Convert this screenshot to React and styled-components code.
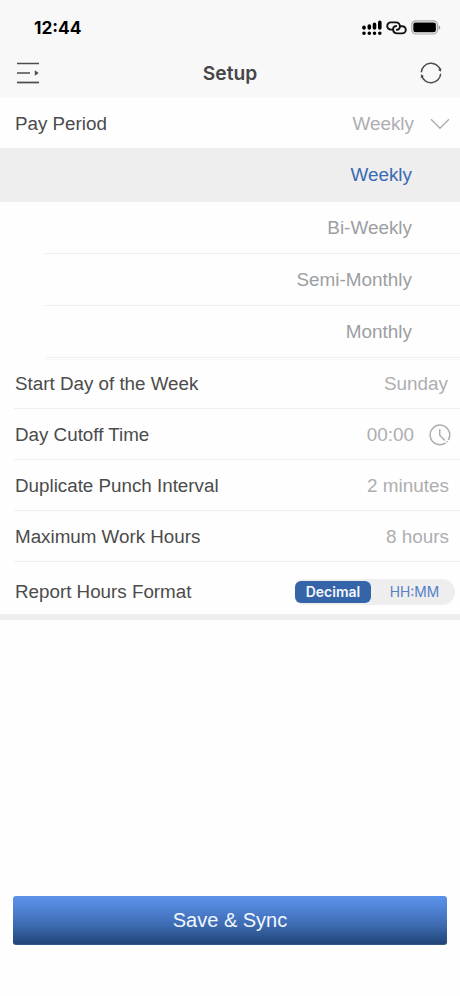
import React, { useState } from 'react';
import styled, { createGlobalStyle } from 'styled-components';

const GlobalStyle = createGlobalStyle`
  * {
    box-sizing: border-box;
  }

  body {
    margin: 0;
    background-color: #fefefe;
    font-family: 'Liberation Sans', Arial, sans-serif;
  }
`;

const Screen = styled.div`
  display: flex;
  flex-direction: column;
  width: 460px;
  height: 996px;
  background-color: #fefefe;
  overflow: hidden;
`;

const Header = styled.header`
  height: 98px;
  background-color: #f8f8f8;
`;

const StatusBar = styled.div`
  display: flex;
  justify-content: space-between;
  align-items: center;
  height: 50px;
  padding: 5px 19px 0 34px;
`;

const Time = styled.span`
  font-family: Inter, sans-serif;
  font-size: 17.3px;
  font-weight: 700;
  color: #000;
`;

const StatusIcons = styled.div`
  display: flex;
  align-items: center;
  gap: 4px;
`;

const NavBar = styled.div`
  display: grid;
  grid-template-columns: 60px 1fr 60px;
  align-items: center;
  height: 46px;
`;

const Title = styled.h1`
  margin: 0;
  font-family: Inter, sans-serif;
  font-size: 19.2px;
  font-weight: 600;
  text-align: center;
  color: #464648;
`;

const IconButton = styled.button`
  display: flex;
  justify-content: ${({ $end }) => ($end ? 'flex-end' : 'flex-start')};
  padding: ${({ $end }) => ($end ? '0 18px 0 0' : '0 0 0 16px')};
  background: none;
  border: none;
  color: #4c4c4e;
  cursor: pointer;
`;

const Row = styled.div`
  display: flex;
  justify-content: space-between;
  align-items: center;
  height: ${({ $height }) => $height || 51}px;
  margin-left: 14px;
  padding: ${({ $top }) => $top || 0}px ${({ $right }) => $right || 0}px 0 1px;
  border-bottom: ${({ $last }) => ($last ? 'none' : '1px solid #efefef')};
`;

const Label = styled.span`
  font-size: 18.8px;
  line-height: 24px;
  color: #4b4b4b;
`;

const Value = styled.span`
  display: flex;
  align-items: center;
  gap: ${({ $gap }) => $gap || 0}px;
  font-size: 18.9px;
  line-height: 24px;
  color: #adaeb2;
`;

const Options = styled.div`
  display: flex;
  flex-direction: column;
  padding-bottom: 1px;
`;

const Option = styled.button`
  display: flex;
  justify-content: flex-end;
  align-items: center;
  height: ${({ $active }) => ($active ? 54 : 52)}px;
  margin-left: ${({ $active }) => ($active ? 0 : 45)}px;
  padding: ${({ $active }) => ($active ? '0 48px 1px 0' : '1px 48px 0 0')};
  background-color: ${({ $active }) => ($active ? '#eeeeee' : 'transparent')};
  border: none;
  border-bottom: ${({ $active }) => ($active ? 'none' : '1px solid #efefef')};
  font-family: inherit;
  font-size: 18.9px;
  color: ${({ $active }) => ($active ? '#3a6ab3' : '#9c9ea3')};
  cursor: pointer;
`;

const OptionsEnd = styled.div`
  height: 1px;
  margin-left: 45px;
  background-color: #f6f6f6;
`;

const Segmented = styled.div`
  display: flex;
  align-items: center;
  width: 160px;
  height: 26px;
  background-color: #eeeeef;
  border-radius: 8px 13px 13px 8px;
`;

const Segment = styled.button`
  width: ${({ $active }) => ($active ? 76 : 84)}px;
  height: 22px;
  padding: 0 0 0 ${({ $active }) => ($active ? 0 : 3)}px;
  background-color: ${({ $active }) => ($active ? '#3564a8' : 'transparent')};
  border: none;
  border-radius: 6px;
  font-family: Inter, sans-serif;
  font-size: ${({ $active }) => ($active ? 14 : 13.8)}px;
  font-weight: ${({ $active }) => ($active ? 600 : 400)};
  color: ${({ $active }) => ($active ? '#f5f8ff' : '#557fc5')};
  cursor: pointer;
`;

const Divider = styled.div`
  height: 6px;
  background-color: #eeeeee;
`;

const Footer = styled.footer`
  margin-top: auto;
  padding: 0 13px 51px;
`;

const SaveButton = styled.button`
  width: 434px;
  height: 49px;
  padding: 0;
  background: linear-gradient(#5b91e9 0%, #5387dc 20%, #3d6ab0 60%, #214679 97%, #3c5f91 100%);
  border: none;
  border-radius: 3px;
  font-family: inherit;
  font-size: 20px;
  color: #f3f7ff;
  cursor: pointer;
`;

const SignalIcon = () => (
  <svg width="20" height="16" viewBox="0 0 20 16" fill="none" stroke="#000" strokeWidth="3.6" strokeLinecap="round">
    <path d="M2 7.2v.8M7.3 6v2M12.5 4.3V8M17.8 2.4V8" />
    <path d="M2 13.2v.1M7.3 13.2v.1M12.5 13.2v.1M17.8 13.2v.1" />
  </svg>
);

const LinkIcon = () => (
  <svg width="21" height="14" viewBox="0 0 21 14" fill="none" stroke="#111" strokeWidth="1.9" strokeLinecap="round">
    <path d="M6.6 8.6H4.8a3.6 3.6 0 0 1 0-7.2h5c5.2 0 5.4 7.4 1 7.4" />
    <path d="M14.2 5.2h2a3.6 3.6 0 0 1 0 7.2h-5c-5.2 0-5.4-7.4-1-7.4" />
  </svg>
);

const BatteryIcon = () => (
  <svg width="30" height="15" viewBox="0 0 30 15">
    <rect x=".8" y=".8" width="25.6" height="13.2" rx="4" fill="#f8f8f8" stroke="#a5a5a5" strokeWidth="1.2" />
    <rect x="2.3" y="2.5" width="22.6" height="9.8" rx="2.2" fill="#000" />
    <path d="M27.6 5.2c2.2.8 2.2 3.8 0 4.6z" fill="#999" />
  </svg>
);

const MenuIcon = () => (
  <svg width="24" height="22" viewBox="0 0 24 22" fill="none" stroke="currentColor" strokeWidth="1.7">
    <path d="M1 1.5h22M1 11h13" />
    <path d="M1 20.5h22" />
    <path d="M18.8 8.2v5.6l3.9-2.8z" fill="currentColor" stroke="none" />
  </svg>
);

const SyncIcon = () => (
  <svg width="22" height="22" viewBox="0 0 22 22" fill="none" stroke="currentColor" strokeWidth="1.5">
    <path d="M1.3 10.2A9.7 9.7 0 0 1 20.3 8.3M20.7 11.8A9.7 9.7 0 0 1 1.7 13.7" />
    <path d="M21.2 5.8l-.1 4-3-1.9zM.8 16.2l.1-4 3 1.9z" fill="currentColor" stroke="none" />
  </svg>
);

const ChevronIcon = () => (
  <svg width="20" height="12" viewBox="0 0 20 12" fill="none" stroke="#adaeb2" strokeWidth="1.4">
    <path d="M1 1.2l9 9 9-9" />
  </svg>
);

const ClockIcon = () => (
  <svg width="22" height="22" viewBox="0 0 22 22" fill="none" stroke="#adaeb2" strokeWidth="1.5">
    <path d="M16.6 18.9A9.8 9.8 0 1 1 19.3 16" />
    <path d="M10.7 5.2v6l5.2 5.3M17.5 17.2l.9.9" />
  </svg>
);

const periods = ['Weekly', 'Bi-Weekly', 'Semi-Monthly', 'Monthly'];
const formats = ['Decimal', 'HH:MM'];

const App = () => {
  const [period, setPeriod] = useState('Weekly');
  const [format, setFormat] = useState('Decimal');

  return (
    <>
      <GlobalStyle />
      <Screen>
        <Header>
          <StatusBar>
            <Time>12:44</Time>
            <StatusIcons>
              <SignalIcon />
              <LinkIcon />
              <BatteryIcon />
            </StatusIcons>
          </StatusBar>
          <NavBar>
            <IconButton aria-label="Menu">
              <MenuIcon />
            </IconButton>
            <Title>Setup</Title>
            <IconButton $end aria-label="Sync">
              <SyncIcon />
            </IconButton>
          </NavBar>
        </Header>

        <Row $height={50} $top={2} $right={10} $last>
          <Label>Pay Period</Label>
          <Value $gap={16}>
            {period}
            <ChevronIcon />
          </Value>
        </Row>
        <Options>
          {periods.map((item) => (
            <Option key={item} $active={item === period} onClick={() => setPeriod(item)}>
              {item}
            </Option>
          ))}
        </Options>
        <OptionsEnd />
        <Row $height={49} $right={12}>
          <Label>Start Day of the Week</Label>
          <Value>Sunday</Value>
        </Row>
        <Row $top={2} $right={9}>
          <Label>Day Cutoff Time</Label>
          <Value $gap={15}>
            00:00
            <ClockIcon />
          </Value>
        </Row>
        <Row $top={2} $right={11}>
          <Label>Duplicate Punch Interval</Label>
          <Value>2 minutes</Value>
        </Row>
        <Row $top={2} $right={11}>
          <Label>Maximum Work Hours</Label>
          <Value>8 hours</Value>
        </Row>
        <Row $height={52} $top={7} $right={5} $last>
          <Label>Report Hours Format</Label>
          <Segmented>
            {formats.map((item) => (
              <Segment key={item} $active={item === format} onClick={() => setFormat(item)}>
                {item}
              </Segment>
            ))}
          </Segmented>
        </Row>
        <Divider />

        <Footer>
          <SaveButton>Save &amp; Sync</SaveButton>
        </Footer>
      </Screen>
    </>
  );
};

export default App;
